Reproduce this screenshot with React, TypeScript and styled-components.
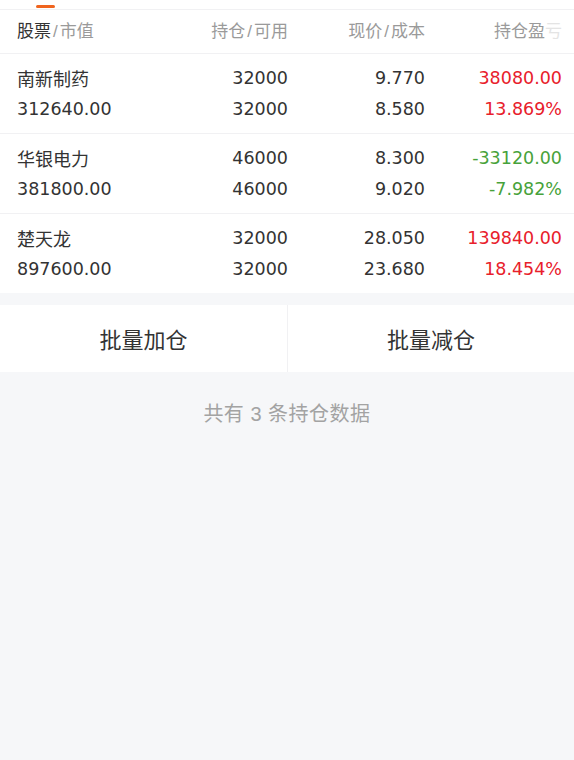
import { styled, createGlobalStyle } from "styled-components";

const GlobalStyle = createGlobalStyle`
  html, body {
    margin: 0;
    padding: 0;
    background: #f6f7f9;
    font-family: "Liberation Sans", "Noto Sans CJK SC", sans-serif;
  }
`;

const Page = styled.div`
  width: 574px;
  min-height: 760px;
  background: #f6f7f9;
`;

const TabBar = styled.div`
  height: 9px;
  background: #fff;
  border-bottom: 1px solid #f1f1f3;
  display: flex;
  align-items: flex-end;
  padding-left: 36px;
`;

const Indicator = styled.div`
  width: 19px;
  height: 3px;
  border-radius: 2px;
  background: #f0641e;
  margin-bottom: 1px;
`;

const Table = styled.div`
  background: #fff;
`;

const Row = styled.div<{ $header?: boolean }>`
  display: grid;
  grid-template-columns: 140px 131px 137px 137px;
  padding: ${(p) => (p.$header ? "7px 12px 6px 17px" : "9px 12px 8px 17px")};
  border-bottom: 1px solid #f1f1f3;
  &:last-child {
    border-bottom: none;
  }
`;

const Cell = styled.div<{ $left?: boolean }>`
  display: flex;
  flex-direction: column;
  align-items: ${(p) => (p.$left ? "flex-start" : "flex-end")};
`;

const HeadText = styled.div`
  font-size: 17px;
  line-height: 30px;
  color: #9a9a9a;
  white-space: nowrap;
  b {
    font-weight: normal;
    color: #333;
  }
  em {
    font-style: normal;
    margin: 0 2px;
  }
  i {
    font-style: normal;
    color: #e4e4e4;
  }
`;

const Value = styled.div<{ $tone?: "up" | "down"; $num?: boolean }>`
  font-family: ${(p) =>
    p.$num ? '"DejaVu Sans", "Noto Sans CJK SC", sans-serif' : '"Noto Sans CJK SC", sans-serif'};
  font-size: ${(p) => (p.$num ? "17.5px" : "18px")};
  line-height: 31px;
  color: ${(p) => (p.$tone === "up" ? "#e8202b" : p.$tone === "down" ? "#47a23a" : "#333")};
  white-space: nowrap;
`;

const Gap = styled.div`
  height: 12px;
`;

const Actions = styled.div`
  display: grid;
  grid-template-columns: 1fr 1fr;
  background: #fff;
  height: 67px;
`;

const ActionButton = styled.button`
  border: none;
  background: #fff;
  font-family: inherit;
  font-size: 22px;
  color: #333;
  padding: 0 0 2px;
  cursor: pointer;
  & + & {
    border-left: 1px solid #f1f1f3;
  }
`;

const Summary = styled.div`
  text-align: center;
  padding-top: 28px;
  font-size: 20px;
  line-height: 28px;
  color: #a3a3a3;
  letter-spacing: 0.5px;
`;

type Position = {
  name: string;
  value: string;
  hold: string;
  avail: string;
  price: string;
  cost: string;
  pnl: string;
  ratio: string;
};

const positions: Position[] = [
  { name: "南新制药", value: "312640.00", hold: "32000", avail: "32000", price: "9.770", cost: "8.580", pnl: "38080.00", ratio: "13.869%" },
  { name: "华银电力", value: "381800.00", hold: "46000", avail: "46000", price: "8.300", cost: "9.020", pnl: "-33120.00", ratio: "-7.982%" },
  { name: "楚天龙", value: "897600.00", hold: "32000", avail: "32000", price: "28.050", cost: "23.680", pnl: "139840.00", ratio: "18.454%" },
];

export default function App() {
  return (
    <Page>
      <GlobalStyle />
      <TabBar>
        <Indicator />
      </TabBar>
      <Table>
        <Row $header>
          <Cell $left>
            <HeadText>
              <b>股票</b><em>/</em>市值
            </HeadText>
          </Cell>
          <Cell>
            <HeadText>持仓<em>/</em>可用</HeadText>
          </Cell>
          <Cell>
            <HeadText>现价<em>/</em>成本</HeadText>
          </Cell>
          <Cell>
            <HeadText>
              持仓盈<i>亏</i>
            </HeadText>
          </Cell>
        </Row>
        {positions.map((p) => {
          const tone = p.pnl.startsWith("-") ? "down" : "up";
          return (
            <Row key={p.name}>
              <Cell $left>
                <Value>{p.name}</Value>
                <Value $num>{p.value}</Value>
              </Cell>
              <Cell>
                <Value $num>{p.hold}</Value>
                <Value $num>{p.avail}</Value>
              </Cell>
              <Cell>
                <Value $num>{p.price}</Value>
                <Value $num>{p.cost}</Value>
              </Cell>
              <Cell>
                <Value $num $tone={tone}>{p.pnl}</Value>
                <Value $num $tone={tone}>{p.ratio}</Value>
              </Cell>
            </Row>
          );
        })}
      </Table>
      <Gap />
      <Actions>
        <ActionButton>批量加仓</ActionButton>
        <ActionButton>批量减仓</ActionButton>
      </Actions>
      <Summary>共有 3 条持仓数据</Summary>
    </Page>
  );
}
